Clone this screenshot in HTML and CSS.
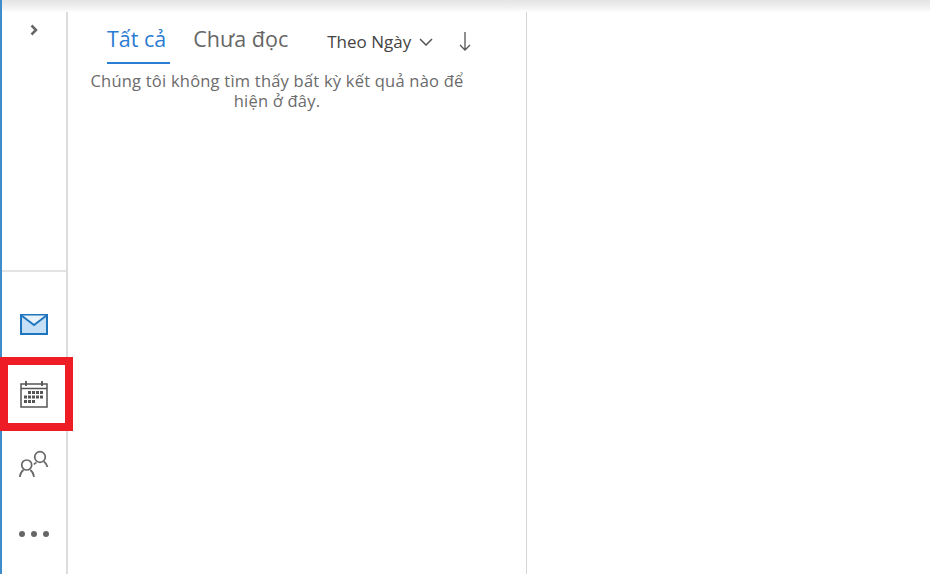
FILE: index.html
```html
<!DOCTYPE html>
<html lang="vi">
<head>
    <meta charset="UTF-8">
    <meta name="viewport" content="width=device-width, initial-scale=1.0">
    <title>Outlook</title>
    <link rel="stylesheet" href="styles.css">
</head>
<body>
    <div class="topbar"></div>
    <div class="app">
        <nav class="rail">
            <button class="expand">
                <svg width="10" height="12" viewBox="0 0 10 12"><path d="M2.5 1.5 7 6l-4.500 4.500" fill="none" stroke="#666" stroke-width="2.500"/></svg>
            </button>
            <ul class="rail-nav">
                <li>
                    <svg width="28" height="21" viewBox="0 0 28 21">
                        <rect x="1" y="1" width="26" height="19" fill="#c4dff6" stroke="#1e74bd" stroke-width="2"/>
                        <path d="M1.500 1.500 14 11 26.500 1.500" fill="#e8f2fb" stroke="#1e74bd" stroke-width="1.800"/>
                    </svg>
                </li>
                <li class="selected">
                    <svg width="28" height="28" viewBox="0 0 28 28" fill="#555">
                        <path d="M1 4h26v23H1z" fill="none" stroke="#555" stroke-width="1.500"/>
                        <path d="M1 8.500h26" stroke="#555" stroke-width="1.500"/>
                        <path d="M6 1v5M22 1v5" stroke="#555" stroke-width="1.800"/>
                        <rect x="8" y="11" width="3" height="3"/><rect x="12" y="11" width="3" height="3"/><rect x="16" y="11" width="3" height="3"/><rect x="20" y="11" width="3" height="3"/>
                        <rect x="4" y="15.500" width="3" height="3"/><rect x="8" y="15.500" width="3" height="3"/><rect x="12" y="15.500" width="3" height="3"/><rect x="16" y="15.500" width="3" height="3"/><rect x="20" y="15.500" width="3" height="3"/>
                        <rect x="4" y="20" width="3" height="3"/><rect x="8" y="20" width="3" height="3"/><rect x="12" y="20" width="3" height="3"/>
                    </svg>
                </li>
                <li>
                    <svg width="30" height="28" viewBox="0 0 30 28" fill="none" stroke="#666" stroke-width="1.700">
                        <circle cx="7.700" cy="15" r="5"/>
                        <path d="M.8 27c.3-3 1.500-5.500 3.700-7M15 27c-.3-3-1.500-5.500-3.700-7"/>
                        <circle cx="21" cy="7" r="5.300"/>
                        <path d="M28.500 17c-.3-2-1.500-4-3.700-5.500M17.500 12.500c-1 .5-1.800 1-2.500 2"/>
                    </svg>
                </li>
                <li>
                    <svg width="30" height="6" viewBox="0 0 30 6" fill="#666"><circle cx="3" cy="3" r="3"/><circle cx="15" cy="3" r="3"/><circle cx="27" cy="3" r="3"/></svg>
                </li>
            </ul>
        </nav>
        <section class="list-pane">
            <div class="filters">
                <div class="tabs">
                    <a class="tab active">Tất cả</a>
                    <a class="tab">Chưa đọc</a>
                </div>
                <div class="sort">
                    <span>Theo Ngày</span>
                    <svg width="14" height="8" viewBox="0 0 14 8"><path d="M1 1l6 6 6-6" fill="none" stroke="#555" stroke-width="1.500"/></svg>
                    <svg class="arrow" width="12" height="19" viewBox="0 0 12 19"><path d="M6 0v18M1 13l5 5 5-5" fill="none" stroke="#555" stroke-width="1.300"/></svg>
                </div>
            </div>
            <p class="empty">Chúng tôi không tìm thấy bất kỳ kết quả nào để hiện ở đây.</p>
        </section>
        <main class="reading-pane"></main>
    </div>
    <div class="highlight"></div>
</body>
</html>
```

FILE: styles.css
```css
/* Global Styles */
html, body {
    height: 100%;
}

body {
    font-family: 'Open Sans', 'Noto Sans', sans-serif;
    margin: 0;
    padding: 0;
    background: #fff;
    color: #666;
    overflow: hidden;
    display: flex;
    flex-direction: column;
    border-left: 2px solid #3f8ccb;
    box-sizing: border-box;
}

.topbar {
    height: 12px;
    flex: none;
    background: linear-gradient(#e4e4e4, #f3f3f3 70%, #fff);
}

.app {
    flex: 1;
    display: flex;
    min-height: 0;
}

/* Left rail */
.rail {
    width: 64px;
    flex: none;
    display: flex;
    flex-direction: column;
    border-right: 2px solid #dcdcdc;
}

.expand {
    background: none;
    border: none;
    padding: 0;
    height: 36px;
    display: flex;
    align-items: center;
    justify-content: center;
}

.rail-nav {
    list-style: none;
    margin: auto 0 0;
    padding: 17px 0 5px;
    border-top: 2px solid #e3e3e3;
}

.rail-nav li {
    height: 70px;
    display: flex;
    align-items: center;
    justify-content: center;
}

/* Message list */
.list-pane {
    width: 458px;
    flex: none;
    border-right: 1px solid #d6d6d6;
}

.filters {
    display: flex;
    align-items: flex-start;
    padding: 12px 0 0 39px;
}

.tabs {
    display: flex;
    gap: 23px;
}

.tab {
    font-size: 21.500px;
    line-height: 29px;
    padding-bottom: 9px;
    color: #666;
}

.tab.active {
    color: #2b7cd3;
    border-bottom: 2px solid #2b7cd3;
    padding-right: 4px;
}

.sort {
    display: flex;
    align-items: center;
    margin: 6px 0 0 39px;
    font-size: 17px;
    line-height: 24px;
    color: #444;
}

.sort span {
    margin-right: 8px;
}

.sort .arrow {
    margin-left: 26px;
    margin-top: -2px;
}

.empty {
    width: 396px;
    margin: 7px 0 0 11px;
    font-size: 16.500px;
    letter-spacing: 0.220px;
    line-height: 20px;
    text-align: center;
    color: #6b6b6b;
}

.reading-pane {
    flex: 1;
}

/* Red annotation box from the screenshot */
.highlight {
    position: absolute;
    left: 0;
    top: 357px;
    width: 57px;
    height: 58px;
    border: 8px solid #ee1c25;
}
```
